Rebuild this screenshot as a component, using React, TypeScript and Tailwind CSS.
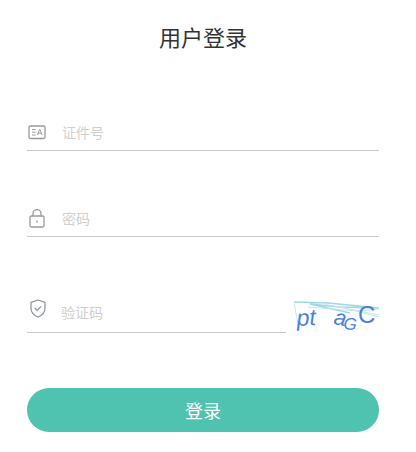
const cjk = "font-['Noto_Sans_CJK_SC','Liberation_Sans',sans-serif]";

function IdIcon() {
  return (
    <svg width="18" height="15" viewBox="0 0 18 15" fill="none" stroke="#9a9a9a" className="shrink-0">
      <rect x="1" y="1" width="16" height="12.5" rx="1.5" strokeWidth="1.3" />
      <path d="M4 4.500h3.500M4 7.200h3.500M4 10h3.500" strokeWidth="1" />
      <path d="M9.500 10l2-5.500h.6l2 5.500M10.200 8.200h3.200" strokeWidth="1" />
    </svg>
  );
}

function LockIcon() {
  return (
    <svg width="16" height="19" viewBox="0 0 16 19" fill="none" stroke="#9a9a9a" className="shrink-0">
      <rect x="1" y="7" width="14" height="11" rx="1.5" strokeWidth="1.3" />
      <path d="M4 7V4.600a4 4 0 0 1 8 0V7" strokeWidth="1.3" />
      <path d="M8 11.500v2" strokeWidth="1.400" />
    </svg>
  );
}

function ShieldIcon() {
  return (
    <svg width="16" height="19" viewBox="0 0 16 19" fill="none" stroke="#8d939c" className="shrink-0">
      <path d="M8 1l7 2.400v6c0 4-3 6.800-7 8.600-4-1.800-7-4.600-7-8.600v-6z" strokeWidth="1.200" strokeLinejoin="round" />
      <path d="M4.800 9l2.300 2.300 4-4" strokeWidth="1.200" />
    </svg>
  );
}

function Captcha() {
  return (
    <svg width="85" height="32" viewBox="0 0 85 32" className="shrink-0">
      <path d="M0 1l34 1 51 5-40-1-29-3 40 9" fill="none" stroke="#9fd8e2" strokeWidth="1.400" />
      <path d="M0 1l5 28M14 6l50 4 21-2M30 3l55 11M62 10l23 6" fill="none" stroke="#c3e7ec" strokeWidth="1" />
      <g fill="#f3c6d6">
        <circle cx="22" cy="29" r=".6" />
        <circle cx="60" cy="4" r=".6" />
        <circle cx="72" cy="27" r=".6" />
        <circle cx="50" cy="29" r=".6" />
      </g>
      <g fill="#4a7fe0" fontFamily="Liberation Sans, sans-serif" fontStyle="italic">
        <text x="3" y="25" fontSize="23" transform="rotate(-3 3 25)">pt</text>
        <text x="39" y="23" fontSize="22" transform="rotate(10 39 23)">a</text>
        <text x="49" y="28" fontSize="17" transform="rotate(6 49 28)">G</text>
        <text x="64" y="22" fontSize="24" fontStyle="normal">C</text>
      </g>
    </svg>
  );
}

export default function App() {
  return (
    <div className={`w-[416px] h-[452px] bg-white pl-[27px] pr-[37px] ${cjk}`}>
      <h1 className="pt-[20px] h-[66px] text-[22px] leading-[33px] font-normal text-[#333] text-center">用户登录</h1>

      <div className="mt-[46px] h-[39px] flex items-center gap-[16px] pl-px pt-[2px] border-b border-[#c8c8c8]">
        <IdIcon />
        <span className="text-sm text-[#cfcfcf]">证件号</span>
      </div>

      <div className="mt-[47px] h-[39px] flex items-center gap-[17px] pl-[2px] pt-[2px] border-b border-[#c8c8c8]">
        <LockIcon />
        <span className="text-sm text-[#cfcfcf]">密码</span>
      </div>

      <div className="mt-[62px] flex items-end justify-between">
        <div className="w-[259px] h-[34px] flex items-start gap-[15px] pl-[3px] border-b border-[#c8c8c8]">
          <ShieldIcon />
          <span className="text-sm leading-[20px] pt-[3px] text-[#cfcfcf]">验证码</span>
        </div>
        <Captcha />
      </div>

      <button className="mt-[55px] w-full h-[44px] rounded-[22px] bg-[#4fc2b0] text-white text-lg">登录</button>
    </div>
  );
}
